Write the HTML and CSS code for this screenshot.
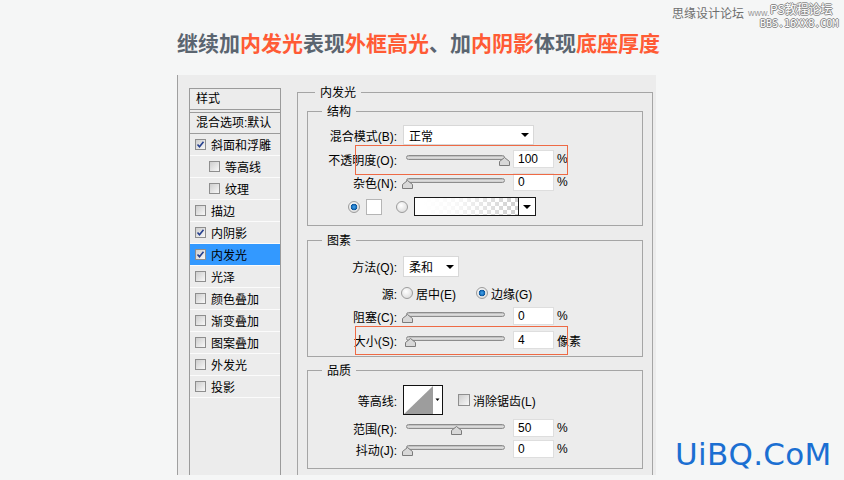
FILE: index.html
```html
<!DOCTYPE html>
<html lang="zh-CN">
<head>
<meta charset="utf-8">
<title>内发光</title>
<link rel="stylesheet" href="styles.css">
</head>
<body>
<div class="page">
  <div class="wm-top">
    <span class="wm-site">思缘设计论坛</span>
    <span class="wm-url">www.</span>
    <span class="wm-ps">PS教程论坛</span>
    <span class="wm-bbs">BBS.16XX8.COM</span>
  </div>

  <h1 class="title">继续加<em>内发光</em>表现<em>外框高光</em>、加<em>内阴影</em>体现<em>底座厚度</em></h1>

  <div class="dialog">
    <div class="list">
      <div class="lhead">样式</div>
      <div class="lblend">混合选项:默认</div>
      <div class="item"><span class="cb"><svg viewBox="0 0 9 9" width="9" height="9"><path d="M1.5 4.5l2 2.2 4-5" fill="none" stroke="#26408f" stroke-width="1.6"/></svg></span>斜面和浮雕</div>
      <div class="item sub"><span class="cb"></span>等高线</div>
      <div class="item sub"><span class="cb"></span>纹理</div>
      <div class="item"><span class="cb"></span>描边</div>
      <div class="item"><span class="cb"><svg viewBox="0 0 9 9" width="9" height="9"><path d="M1.5 4.5l2 2.2 4-5" fill="none" stroke="#26408f" stroke-width="1.6"/></svg></span>内阴影</div>
      <div class="item selected"><span class="cb"><svg viewBox="0 0 9 9" width="9" height="9"><path d="M1.5 4.5l2 2.2 4-5" fill="none" stroke="#26408f" stroke-width="1.6"/></svg></span>内发光</div>
      <div class="item"><span class="cb"></span>光泽</div>
      <div class="item"><span class="cb"></span>颜色叠加</div>
      <div class="item"><span class="cb"></span>渐变叠加</div>
      <div class="item"><span class="cb"></span>图案叠加</div>
      <div class="item"><span class="cb"></span>外发光</div>
      <div class="item"><span class="cb"></span>投影</div>
    </div>

    <fieldset class="outer">
      <legend>内发光</legend>

      <fieldset class="grp g-struct">
        <legend>结构</legend>
        <div class="row r-blend">
          <span class="lbl">混合模式(B):</span>
          <div class="select sel-blend"><span>正常</span><i class="arrow"></i></div>
        </div>
        <div class="row r-op">
          <span class="lbl">不透明度(O):</span>
          <div class="slider"><div class="track"></div><svg class="thumb" style="left:96px" width="11" height="9" viewBox="0 0 11 9"><path d="M5.5.5 10.5 4.5V8.5H.5V4.5Z" fill="#d8d8d8" stroke="#7b7b7b"/></svg></div>
          <div class="num">100</div><span class="unit">%</span>
        </div>
        <div class="row r-noise">
          <span class="lbl">杂色(N):</span>
          <div class="slider"><div class="track"></div><svg class="thumb" style="left:-1px" width="11" height="9" viewBox="0 0 11 9"><path d="M5.5.5 10.5 4.5V8.5H.5V4.5Z" fill="#d8d8d8" stroke="#7b7b7b"/></svg></div>
          <div class="num">0</div><span class="unit">%</span>
        </div>
        <div class="row r-color">
          <span class="radio on"></span>
          <span class="swatch"></span>
          <span class="radio r-grad"></span>
          <div class="gradbox"><span class="grad"></span><span class="gradarrow"><i class="arrow"></i></span></div>
        </div>
      </fieldset>

      <fieldset class="grp g-elem">
        <legend>图素</legend>
        <div class="row r-method">
          <span class="lbl">方法(Q):</span>
          <div class="select sel-method"><span>柔和</span><i class="arrow"></i></div>
        </div>
        <div class="row r-source">
          <span class="lbl">源:</span>
          <span class="radio src1"></span><span class="rtext">居中(E)</span>
          <span class="radio on src2"></span><span class="rtext">边缘(G)</span>
        </div>
        <div class="row r-choke">
          <span class="lbl">阻塞(C):</span>
          <div class="slider"><div class="track"></div><svg class="thumb" style="left:-1px" width="11" height="9" viewBox="0 0 11 9"><path d="M5.5.5 10.5 4.5V8.5H.5V4.5Z" fill="#d8d8d8" stroke="#7b7b7b"/></svg></div>
          <div class="num">0</div><span class="unit">%</span>
        </div>
        <div class="row r-size">
          <span class="lbl">大小(S):</span>
          <div class="slider"><div class="track"></div><svg class="thumb" style="left:2px" width="11" height="9" viewBox="0 0 11 9"><path d="M5.5.5 10.5 4.5V8.5H.5V4.5Z" fill="#d8d8d8" stroke="#7b7b7b"/></svg></div>
          <div class="num">4</div><span class="unit">像素</span>
        </div>
      </fieldset>

      <fieldset class="grp g-quality">
        <legend>品质</legend>
        <div class="row r-contour">
          <span class="lbl">等高线:</span>
          <svg class="contour" width="40" height="30" viewBox="0 0 40 30"><rect x=".5" y=".5" width="39" height="29" fill="#fff" stroke="#111"/><path d="M1 29 L30 1 V29Z" fill="#9d9d9d"/><path d="M32.5 13.5h4l-2 2.5z" fill="#000"/></svg>
          <span class="cb aa"></span><span class="rtext">消除锯齿(L)</span>
        </div>
        <div class="row r-range">
          <span class="lbl">范围(R):</span>
          <div class="slider"><div class="track"></div><svg class="thumb" style="left:48px" width="11" height="9" viewBox="0 0 11 9"><path d="M5.5.5 10.5 4.5V8.5H.5V4.5Z" fill="#d8d8d8" stroke="#7b7b7b"/></svg></div>
          <div class="num">50</div><span class="unit">%</span>
        </div>
        <div class="row r-jitter">
          <span class="lbl">抖动(J):</span>
          <div class="slider"><div class="track"></div><svg class="thumb" style="left:-1px" width="11" height="9" viewBox="0 0 11 9"><path d="M5.5.5 10.5 4.5V8.5H.5V4.5Z" fill="#d8d8d8" stroke="#7b7b7b"/></svg></div>
          <div class="num">0</div><span class="unit">%</span>
        </div>
      </fieldset>
    </fieldset>

    <div class="hl hl-op"></div>
    <div class="hl hl-size"></div>
  </div>

  <div class="logo">UiBQ.CoM</div>
</div>
</body>
</html>
```
FILE: styles.css
```css
* { box-sizing: border-box; }
html, body { margin: 0; }
body {
  background: #f5f6f6;
  font-family: "Liberation Sans", "Noto Sans CJK SC", sans-serif;
  font-size: 12px;
  color: #000;
}
.page { position: relative; width: 844px; height: 480px; overflow: hidden; }

/* watermarks */
.wm-top {
  position: absolute; left: 672px; top: 0; width: 172px; height: 32px;
  white-space: nowrap;
}
.wm-top span { position: absolute; display: block; }
.wm-site {
  left: 0; top: 6px;
  font-family: "Noto Sans CJK SC", sans-serif; font-size: 12px; line-height: 14px;
  color: #6e6e6e;
}
.wm-url {
  left: 76px; top: 9px; font-family: "Liberation Sans", sans-serif;
  font-size: 9px; line-height: 8px; color: #9a9a9a;
}
.wm-ps, .wm-bbs {
  color: #fff;
  text-shadow: 1px 0 #8a8a8a, -1px 0 #8a8a8a, 0 1px #8a8a8a, 0 -1px #8a8a8a;
}
.wm-ps { left: 98px; top: 2px; font-family: "Noto Sans CJK SC", sans-serif; font-size: 12px; line-height: 13px; }
.wm-bbs { left: 88px; top: 18px; font-family: "DejaVu Sans Mono", monospace; font-size: 10px; line-height: 11px; }

.logo {
  position: absolute; left: 675px; top: 439px;
  font-family: "DejaVu Sans", sans-serif; font-size: 31px; line-height: 31px;
  color: #1b6fd2; letter-spacing: 0.3px;
}

/* title */
.title {
  margin: 0 0 0 177px; padding-top: 30px;
  font-family: "Noto Sans CJK SC", sans-serif; font-weight: 700;
  font-size: 21px; line-height: 24px; color: #5b6570; white-space: nowrap;
}
.title em { font-style: normal; color: #ff5b35; }

/* dialog */
.dialog {
  position: relative;
  margin: 21px 0 0 177px; width: 479px; height: 400px;
  background: #ececec; border-left: 1px solid #a0a0a0;
  padding: 10px 0 0 11px;
  display: flex; align-items: flex-start; overflow: hidden;
  font-family: "Liberation Sans", "Noto Sans CJK SC", sans-serif;
}

/* styles list */
.list {
  flex: none; margin-top: 3px; width: 92px; height: 400px;
  border: 1px solid #9b9b9b; border-bottom: none;
}
.lhead { height: 21px; border-bottom: 1px solid #9b9b9b; padding-left: 6px; line-height: 20px; }
.lblend {
  margin-top: 2px; height: 22px; line-height: 20px; padding-left: 6px;
  border-top: 1px solid #9b9b9b; border-bottom: 1px solid #9b9b9b; white-space: nowrap;
}
.item {
  height: 22px; border-bottom: 1px solid #fbfbfb;
  display: flex; align-items: center; gap: 5px; padding-left: 5px; padding-bottom: 1px;
}
.item.sub { padding-left: 19px; }
.item.selected { background: #3399ff; }
.cb {
  flex: none; width: 11px; height: 11px;
  border: 1px solid #8e8e8e;
  background: linear-gradient(135deg, #cdcdcd, #f8f8f8);
  display: flex; align-items: center; justify-content: center;
}
.cb svg { display: block; }

/* group boxes */
fieldset { margin: 0; padding: 0; border: 1px solid #a5a5a5; min-inline-size: 0; }
legend {
  padding: 0 5px; font-family: "Noto Sans CJK SC", sans-serif;
  font-size: 12px; line-height: 14px;
}
.outer { flex: none; margin-left: 16px; width: 356px; height: 400px; border-bottom: none; }
.outer > legend { margin-left: 17px; }
.grp { margin: 0 9px; }
.grp > legend { margin-left: 14px; }
.g-struct { margin-top: 5px; padding-bottom: 9px; }
.g-elem { margin-top: 7px; padding-bottom: 7px; }
.g-quality { margin-top: 6px; padding-bottom: 10px; }

.row { display: flex; align-items: center; white-space: nowrap; }
.lbl { flex: none; width: 89px; margin-right: 6px; text-align: right; }

.r-blend { margin-top: 7px; height: 20px; }
.r-op { margin-top: 5px; height: 18px; }
.r-noise { margin-top: 5px; height: 18px; }
.r-color { margin-top: 6px; height: 19px; padding-left: 40px; }
.r-method { margin-top: 9px; height: 21px; }
.r-source { margin-top: 8px; height: 16px; }
.r-choke { margin-top: 6px; height: 18px; }
.r-size { margin-top: 6px; height: 18px; }
.r-contour { margin-top: 8px; height: 30px; }
.r-range { margin-top: 4px; height: 18px; }
.r-jitter { margin-top: 3px; height: 18px; }

/* dropdowns */
.select {
  flex: none; height: 100%; background: #fff; border: 1px solid #d8d8d8;
  display: flex; align-items: center; justify-content: space-between;
  padding: 0 4px 0 5px; font-family: "Noto Sans CJK SC", sans-serif;
}
.sel-blend { width: 131px; }
.sel-method { width: 56px; }
.arrow {
  display: block; width: 0; height: 0;
  border-left: 4px solid transparent; border-right: 4px solid transparent;
  border-top: 4px solid #000;
}

/* sliders */
.slider { flex: none; position: relative; width: 110px; height: 100%; }
.track {
  margin: 5px 0 0 3px; width: 99px; height: 5px; border-radius: 3px;
  border: 1px solid #8c8c8c;
  background: linear-gradient(#b4b4b4, #e4e4e4 60%, #c4c4c4);
}
.thumb { position: absolute; top: 7px; display: block; }
.num {
  flex: none; width: 41px; height: 18px; background: #fff;
  border: 1px solid #dedede; padding-left: 4px; line-height: 16px;
}
.unit { margin-left: 3px; }

/* radios */
.radio {
  flex: none; width: 12px; height: 12px; border-radius: 50%;
  border: 1px solid #9c9c9c;
  background: radial-gradient(circle at 40% 35%, #ffffff, #d4d4d4);
}
.radio.on {
  background:
    radial-gradient(circle at 50% 50%, #45a6ee 0, #1467b3 2.5px, #0b4f8f 3px, rgba(0,0,0,0) 3.6px),
    radial-gradient(circle at 40% 35%, #ffffff, #d4d4d4);
}
.swatch { flex: none; margin-left: 6px; width: 16px; height: 16px; background: #fff; border: 1px solid #b5b5b5; }
.r-grad { margin-left: 14px; }
.gradbox {
  flex: none; margin-left: 6px; width: 122px; height: 19px;
  border: 1px solid #1a1a1a; display: flex;
}
.grad {
  flex: 1;
  background:
    linear-gradient(to right, #fff 8%, rgba(255,255,255,0.85) 40%, rgba(255,255,255,0) 95%),
    repeating-conic-gradient(#d2d2d2 0 25%, #ffffff 0 50%) 0 0 / 8px 8px;
}
.gradarrow {
  flex: none; width: 17px; border-left: 1px solid #1a1a1a; background: #fff;
  display: flex; align-items: center; justify-content: center;
}

.src1 { margin-left: -2px; }
.rtext { margin-left: 3px; }
.src2 { margin-left: 20px; }

.contour { flex: none; display: block; }
.cb.aa { width: 12px; height: 12px; margin-left: 15px; }

/* red highlight overlays */
.hl { position: absolute; left: 177px; width: 213px; border: 1px solid #ee6a45; }
.hl-op { top: 70px; height: 30px; }
.hl-size { top: 251px; height: 29px; }
```
